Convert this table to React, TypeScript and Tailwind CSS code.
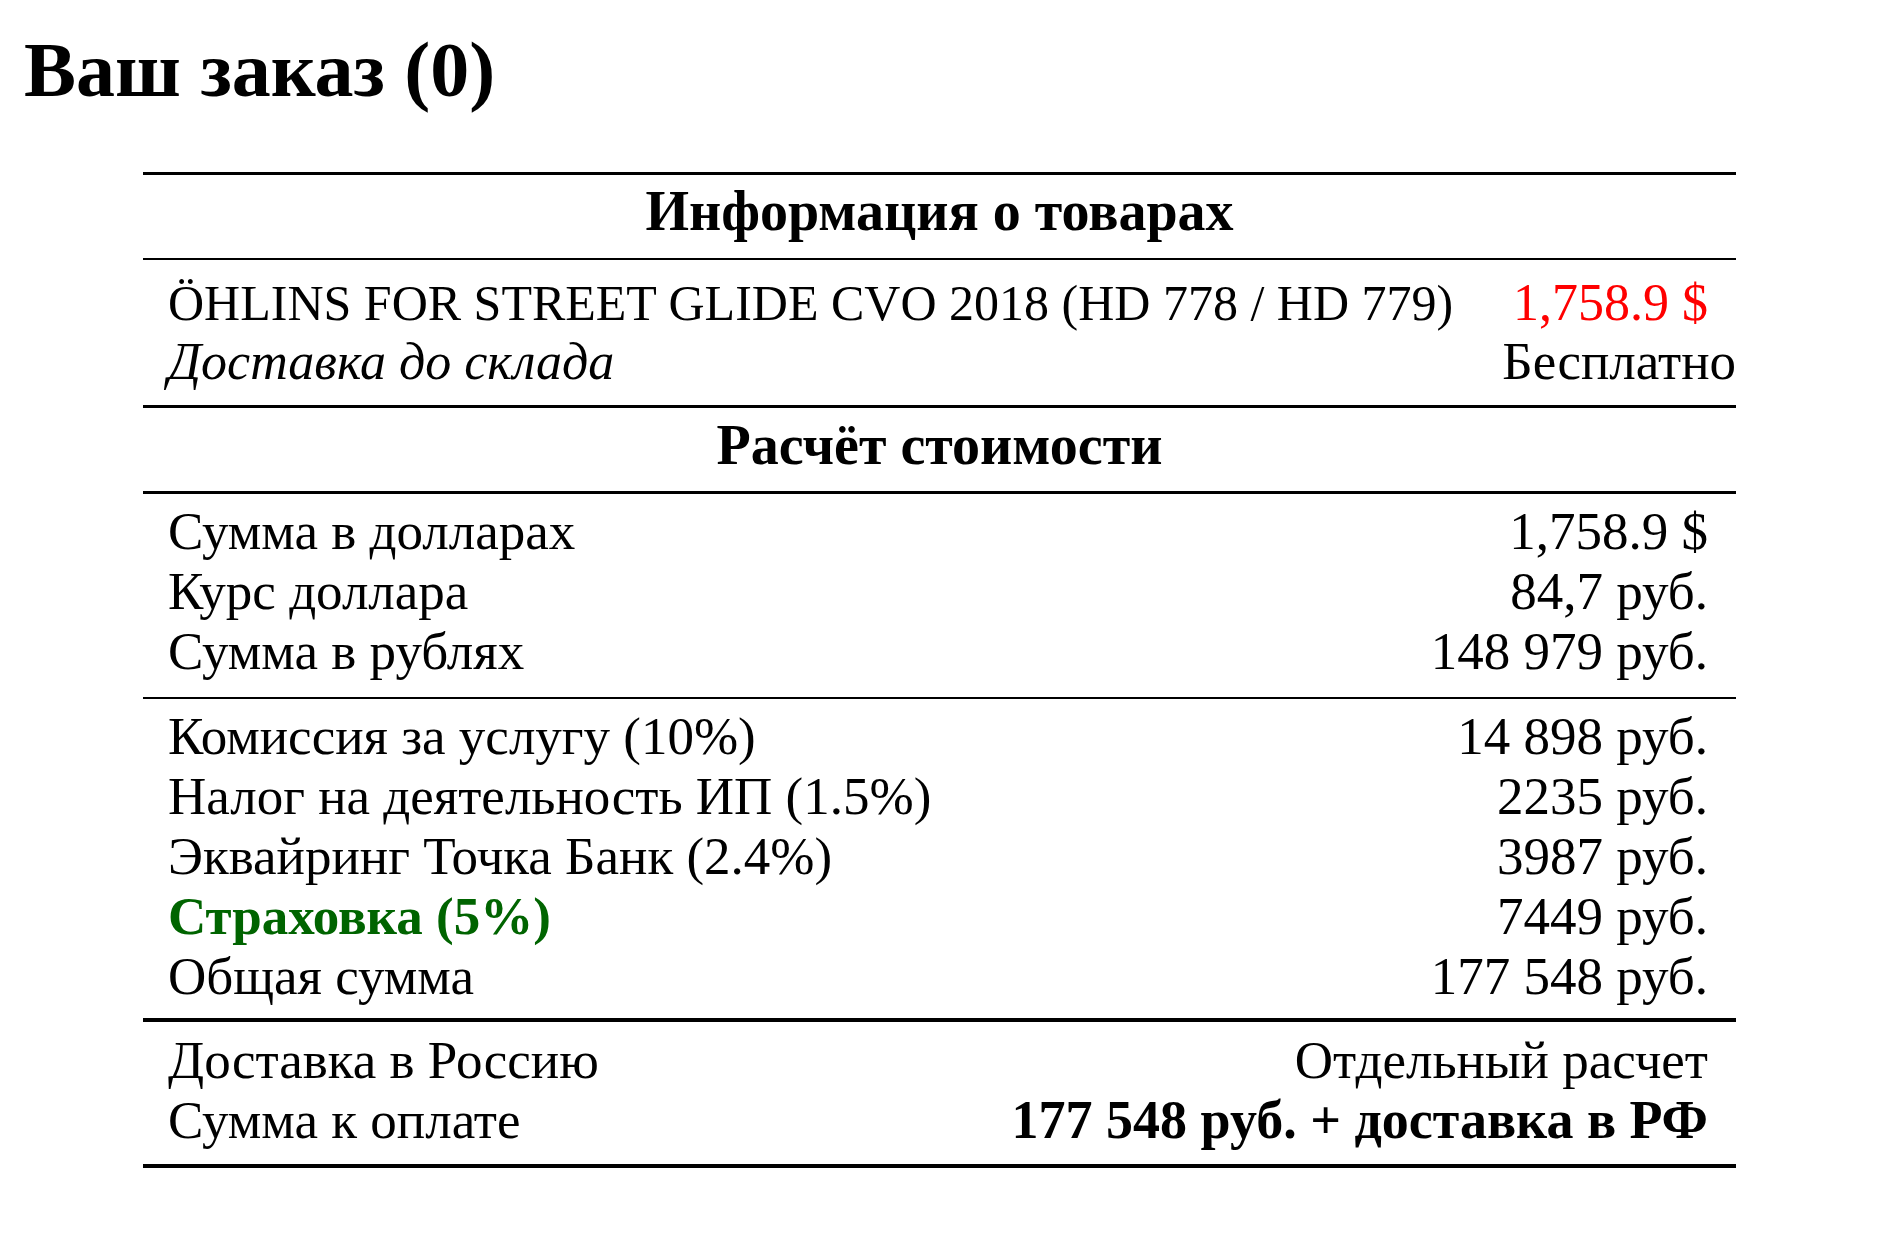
import React from "react"

type Line = {
  label: React.ReactNode
  value: React.ReactNode
}

function Rows({ lines, className }: { lines: Line[]; className: string }) {
  return (
    <div className={className}>
      {lines.map((l, i) => (
        <div key={i} className="flex items-baseline justify-between whitespace-nowrap">
          <span>{l.label}</span>
          <span>{l.value}</span>
        </div>
      ))}
    </div>
  )
}

export default function App() {
  return (
    <div className="min-h-screen bg-white font-['Liberation_Serif',serif] text-black">
      {/* Title */}
      <h1 className="pl-[24px] pt-[31px] text-[78px] font-bold leading-[78px]">Ваш заказ (0)</h1>

      {/* Order table */}
      <div className="ml-[143px] mt-[63px] w-[1593px] border-t-[3px] border-b-[4px] border-black text-[53px] leading-[60px]">
        <div className="h-[83px] pt-[6px] text-center text-[56px] font-bold">Информация о товарах</div>

        <div className="border-t-2 border-black pb-[13px] pl-[25px] pr-[28px] pt-[13px]">
          <div className="flex items-baseline justify-between whitespace-nowrap">
            <span className="text-[50px]">ÖHLINS FOR STREET GLIDE CVO 2018 (HD 778 / HD 779)</span>
            <span className="text-[52px] text-[#ff0000]">1,758.9 $</span>
          </div>
          <div className="-mr-[28px] -mt-[2px] flex items-baseline justify-between whitespace-nowrap">
            <span className="text-[52px] italic">Доставка до склада</span>
            <span>Бесплатно</span>
          </div>
        </div>

        <div className="h-[86px] border-t-[3px] border-black pt-[7px] text-center text-[56px] font-bold">Расчёт стоимости</div>

        <Rows
          className="border-t-[3px] border-black pb-[16px] pl-[25px] pr-[28px] pt-[7px]"
          lines={[
            { label: "Сумма в долларах", value: "1,758.9 $" },
            { label: "Курс доллара", value: "84,7 руб." },
            { label: "Сумма в рублях", value: "148 979 руб." },
          ]}
        />

        <Rows
          className="border-t-2 border-black pb-[12px] pl-[25px] pr-[28px] pt-[7px]"
          lines={[
            { label: "Комиссия за услугу (10%)", value: "14 898 руб." },
            { label: "Налог на деятельность ИП (1.5%)", value: "2235 руб." },
            { label: "Эквайринг Точка Банк (2.4%)", value: "3987 руб." },
            {
              label: <span className="font-bold text-[#006400]">Страховка (5%)</span>,
              value: "7449 руб.",
            },
            { label: "Общая сумма", value: "177 548 руб." },
          ]}
        />

        <Rows
          className="border-t-4 border-black pb-[14px] pl-[25px] pr-[28px] pt-[8px]"
          lines={[
            { label: "Доставка в Россию", value: "Отдельный расчет" },
            {
              label: "Сумма к оплате",
              value: <span className="text-[54px] font-bold">177 548 руб. + доставка в РФ</span>,
            },
          ]}
        />
      </div>
    </div>
  )
}
